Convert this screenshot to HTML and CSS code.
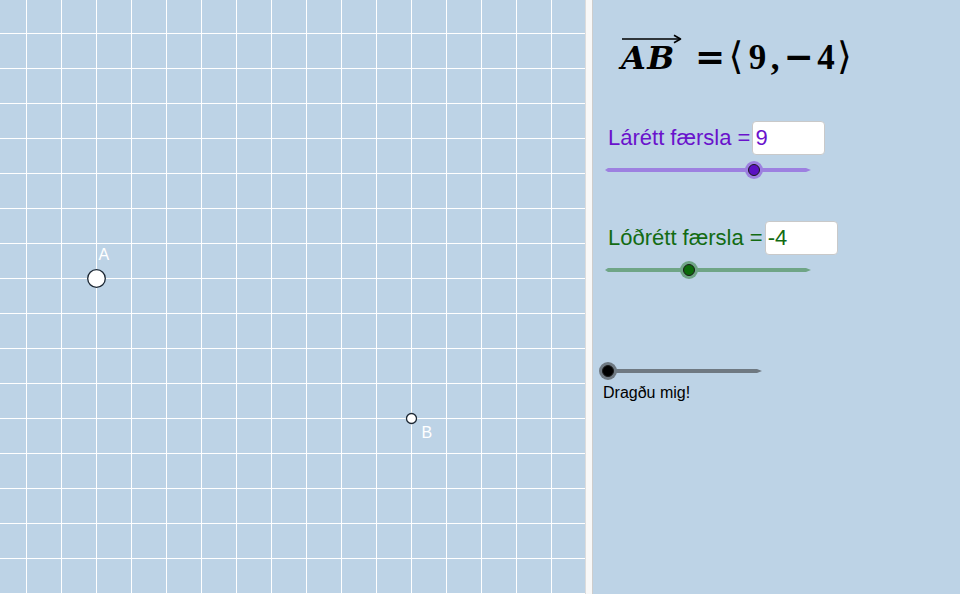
FILE: index.html
```html
<!DOCTYPE html>
<html>
<head>
<meta charset="utf-8">
<link rel="stylesheet" href="styles.css">
</head>
<body>
<div class="app">
  <div class="graphics">
    <svg class="canvas" width="585" height="594" viewBox="0 0 585 594">
      <circle cx="96.5" cy="278.5" r="8.8" fill="#ffffff" stroke="#1c2733" stroke-width="1.3"/>
      <text x="98.5" y="260" class="ptlabel">A</text>
      <circle cx="411.5" cy="418.5" r="5" fill="#ffffff" stroke="#1c2733" stroke-width="1.3"/>
      <text x="421.5" y="438" class="ptlabel">B</text>
    </svg>
  </div>
  <div class="divider"></div>
  <div class="panel">
    <div class="formula">
      <span class="g vec">AB<svg class="arrow" width="61" height="10" viewBox="0 0 61 10"><path d="M1 5H59" stroke="#000" stroke-width="1.6" fill="none"/><path d="M53 1.2L59.5 5L53 8.8" stroke="#000" stroke-width="1.6" fill="none" stroke-linejoin="round"/></svg></span><span class="g eq">=</span><span class="g br bl">⟨</span><span class="g num n9">9</span><span class="g num comma">,</span><span class="g eq minus">−</span><span class="g num n4">4</span><span class="g br brr">⟩</span>
    </div>

    <div class="slider s1">
      <div class="row">
        <span class="lbl">Lárétt færsla =</span><span class="box">9</span>
      </div>
      <div class="track"><span class="line"></span><span class="knob k1"></span></div>
    </div>

    <div class="slider s2">
      <div class="row">
        <span class="lbl">Lóðrétt færsla =</span><span class="box">-4</span>
      </div>
      <div class="track"><span class="line"></span><span class="knob k2"></span></div>
    </div>

    <div class="slider s3">
      <div class="track"><span class="line"></span><span class="knob k3"></span></div>
      <div class="caption">Dragðu mig!</div>
    </div>
  </div>
</div>
</body>
</html>
```
FILE: styles.css
```css
html, body {
  margin: 0;
  padding: 0;
}
body {
  width: 960px;
  height: 594px;
  overflow: hidden;
  font-family: "Liberation Sans", Arial, sans-serif;
  background: #bdd3e6;
}
.app {
  display: flex;
  height: 594px;
}
.graphics {
  width: 585px;
  flex: none;
  background-color: #bdd3e6;
  background-image:
    linear-gradient(to right, #ffffff 1px, transparent 1px),
    linear-gradient(to bottom, #ffffff 1px, transparent 1px);
  background-size: 35px 35px;
  background-position: 26px 33px;
}
.canvas {
  display: block;
}
.ptlabel {
  font-family: "Liberation Sans", Arial, sans-serif;
  font-size: 16px;
  fill: #ffffff;
}
.divider {
  width: 6px;
  flex: none;
  background: #f8f8f8;
  border-left: 1px solid #dcdcdc;
  border-right: 1px solid #cdcdcd;
}
.panel {
  flex: 1;
  background: #bdd3e6;
  display: flex;
  flex-direction: column;
  padding: 36px 0 0 12px;
}

/* formula */
.formula {
  margin-left: 16px;
  font-family: "DejaVu Serif", "Liberation Serif", serif;
  font-size: 32px;
  line-height: 40px;
  height: 40px;
  white-space: nowrap;
  color: #000;
}
.g {
  display: inline-block;
  text-align: center;
  line-height: 40px;
}
.vec {
  position: relative;
  width: 60px;
  text-align: left;
  font-family: "DejaVu Serif", serif;
  font-weight: bold;
  font-style: italic;
  font-size: 32px;
  letter-spacing: 1.5px;
}
.arrow {
  position: absolute;
  left: 0;
  top: -4px;
}
.eq {
  font-family: "DejaVu Sans", sans-serif;
  font-weight: bold;
  font-size: 36px;
  width: 27px;
  margin-left: 14px;
}
.br {
  font-family: "DejaVu Sans", sans-serif;
  font-size: 38px;
  font-weight: normal;
}
.bl {
  width: 20px;
  margin-left: 4px;
}
.brr {
  width: 17px;
}
.num {
  font-family: "Liberation Serif", serif;
  font-weight: bold;
  font-size: 35px;
}
.n9 { width: 23px; }
.comma { width: 12px; }
.minus {
  width: 35px;
  margin-left: 0;
}
.n4 { width: 20px; }

/* sliders */
.slider {
  display: flex;
  flex-direction: column;
}
.s1 {
  margin-top: 45px;
  color: #6a12cc;
}
.s2 {
  margin-top: 49px;
  color: #136b13;
}
.s3 {
  margin-top: 97px;
}
.row {
  display: flex;
  align-items: baseline;
  margin-left: 3px;
}
.lbl {
  font-size: 22px;
  white-space: nowrap;
}
.box {
  width: 73px;
  height: 34px;
  box-sizing: border-box;
  border: 1px solid #c9c9c9;
  border-radius: 4px;
  background: #ffffff;
  font-size: 22px;
  line-height: 32px;
  padding-left: 2px;
  margin-left: 2px;
}
.track {
  position: relative;
  width: 206px;
  height: 4px;
  margin-top: 13px;
}
.line {
  display: block;
  height: 4px;
  clip-path: polygon(0 50%, 3px 0, calc(100% - 5px) 0, 100% 50%, calc(100% - 5px) 100%, 3px 100%);
}
.s1 .line { background: #9d80e0; }
.s2 .line { background: #6fa586; }
.s3 .line { background: #6f7982; }
.s3 .track {
  width: 158px;
  margin-top: 0;
  margin-left: -1px;
}
.knob {
  position: absolute;
  top: -4px;
  width: 12px;
  height: 12px;
  box-sizing: border-box;
  border-radius: 50%;
  border: 1px solid #1a1a1a;
}
.k1 {
  left: 143px;
  background: #5b10c2;
  box-shadow: 0 0 0 3px #9d80e0;
}
.k2 {
  left: 78px;
  background: #0b6a0b;
  box-shadow: 0 0 0 3px #6fa586;
}
.k3 {
  left: -2px;
  background: #000000;
  box-shadow: 0 0 0 3px #6f7982;
}
.caption {
  margin-top: 11px;
  margin-left: -2px;
  font-size: 16px;
  color: #000;
}
```
